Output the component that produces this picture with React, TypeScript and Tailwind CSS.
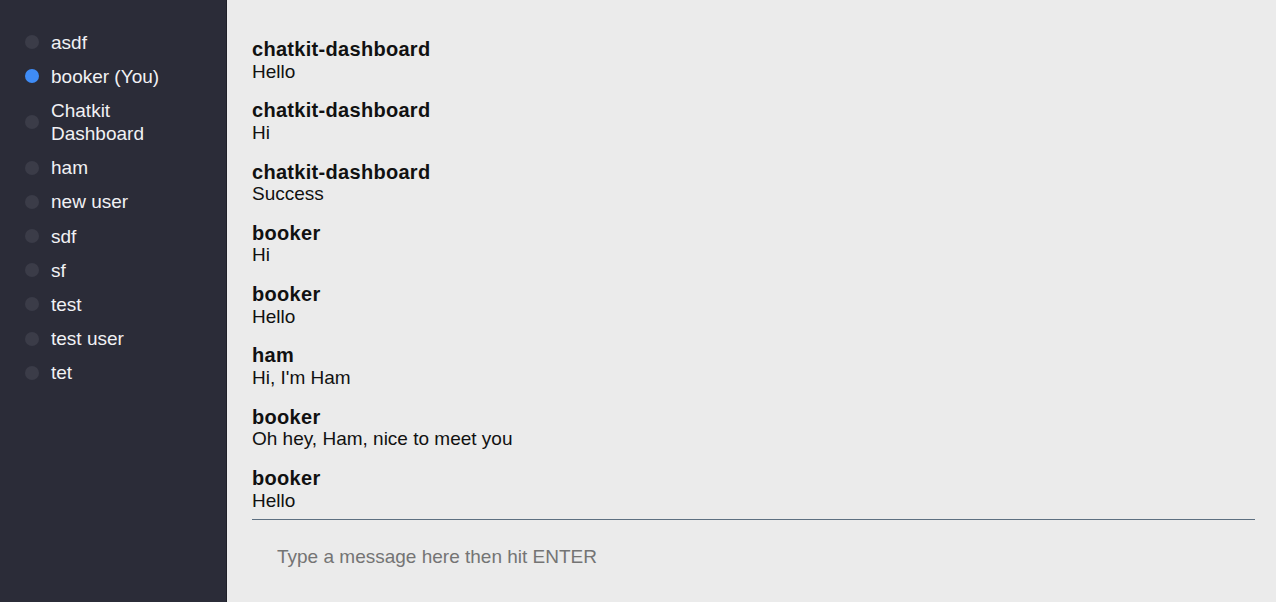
const users = [
  { name: "asdf" },
  { name: "booker (You)", online: true },
  { name: "Chatkit Dashboard" },
  { name: "ham" },
  { name: "new user" },
  { name: "sdf" },
  { name: "sf" },
  { name: "test" },
  { name: "test user" },
  { name: "tet" },
];

const messages = [
  { sender: "chatkit-dashboard", text: "Hello" },
  { sender: "chatkit-dashboard", text: "Hi" },
  { sender: "chatkit-dashboard", text: "Success" },
  { sender: "booker", text: "Hi" },
  { sender: "booker", text: "Hello" },
  { sender: "ham", text: "Hi, I'm Ham" },
  { sender: "booker", text: "Oh hey, Ham, nice to meet you" },
  { sender: "booker", text: "Hello" },
];

export default function App() {
  return (
    <div className="flex h-[602px] w-full overflow-hidden font-['Liberation_Sans',sans-serif] text-[19px] leading-[23px]">
      {/* Who's online */}
      <aside className="w-[227px] shrink-0 border-r border-[#1f2029] bg-[#2b2c38] pt-[25px] pl-[25px]">
        <ul>
          {users.map((u) => (
            <li key={u.name} className="flex items-center gap-[12px] py-[5.6px]">
              <span
                className={
                  u.online
                    ? "h-[14px] w-[14px] shrink-0 rounded-full bg-[#3f8cf6]"
                    : "h-[14px] w-[14px] shrink-0 rounded-full bg-[#3b3c48]"
                }
              />
              <span className="max-w-[130px] text-[#f1f1f4]">{u.name}</span>
            </li>
          ))}
        </ul>
      </aside>

      {/* Chat */}
      <main className="flex flex-1 flex-col bg-[#ebebeb] pl-[25px] pr-[21px] pt-[38px]">
        <ul className="flex flex-col gap-[16.3px] pb-[6.5px] text-[#111]">
          {messages.map((m, i) => (
            <li key={i}>
              <div className="text-[20px] leading-[22.5px] font-bold tracking-[0.3px]">{m.sender}</div>
              <div className="leading-[22.5px]">{m.text}</div>
            </li>
          ))}
        </ul>
        <div className="border-t border-[#5d6f80] px-[25px] pt-[25.5px]">
          <input
            autoFocus
            className="w-full bg-transparent text-[#111] placeholder-[#747474] outline-none"
            placeholder="Type a message here then hit ENTER"
          />
        </div>
      </main>
    </div>
  );
}
